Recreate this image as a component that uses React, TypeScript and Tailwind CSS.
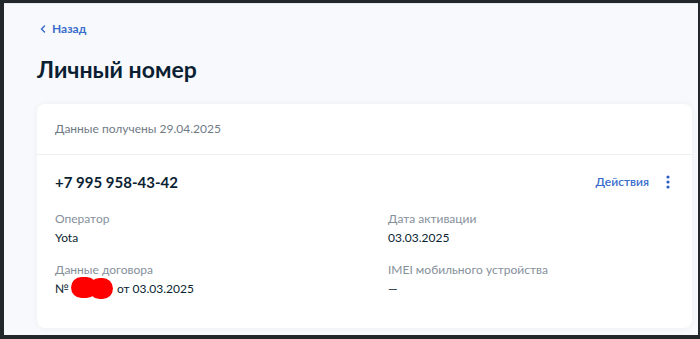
import { ChevronLeft } from 'lucide-react'

function Field({ label, children }: { label: string; children: React.ReactNode }) {
  return (
    <div className="flex flex-col">
      <span className="text-[12px] leading-[18px] text-[#86909b]">{label}</span>
      <span className="text-[12px] leading-[19px] text-[#0b1f33]">{children}</span>
    </div>
  )
}

export default function App() {
  return (
    <div
      className="h-[339px] w-[700px] overflow-hidden border-t-[3px] border-l-[4px] border-r-[2px] border-b-[4px] border-[#22272c] bg-[#f8f9fc]"
      style={{ fontFamily: 'Lato, "Noto Sans", sans-serif' }}
    >
      <div className="flex h-full flex-col border-t border-[#e6e9ee] pl-[33px] pr-[6px]">
        {/* Back link */}
        <a className="mt-[17px] flex items-center gap-[3px] text-[12px] font-bold leading-[16px] text-[#3a6dcb]">
          <ChevronLeft size={12} strokeWidth={3} />
          <span>Назад</span>
        </a>

        {/* Title */}
        <h1 className="mt-[17px] text-[23px] font-bold leading-[30px] text-[#0b1f33]">Личный номер</h1>

        {/* Card */}
        <div className="mt-[20px] rounded-[8px] bg-white shadow-[0_0_6px_rgba(40,60,120,0.06)]">
          <div className="flex h-[51px] items-center border-b border-[#eceef2] px-[18px]">
            <span className="text-[12px] text-[#6f7a85]">Данные получены 29.04.2025</span>
          </div>

          <div className="px-[18px] pt-[16px] pb-[30px]">
            <div className="flex items-center justify-between">
              <span className="text-[15px] font-bold leading-[22px] text-[#0b1f33]">+7 995 958-43-42</span>
              <div className="flex items-center gap-[17px] pr-[4px]">
                <span className="text-[12px] font-semibold text-[#3a6dcb]">Действия</span>
                <svg width="4" height="14" viewBox="0 0 4 14" className="text-[#2d5fc0]">
                  <circle cx="2" cy="2" r="1.6" fill="currentColor" />
                  <circle cx="2" cy="7" r="1.6" fill="currentColor" />
                  <circle cx="2" cy="12" r="1.6" fill="currentColor" />
                </svg>
              </div>
            </div>

            <div className="mt-[17px] grid grid-cols-[333px_1fr] gap-y-[14px]">
              <Field label="Оператор">Yota</Field>
              <Field label="Дата активации">03.03.2025</Field>
              <Field label="Данные договора">
                <span className="flex items-center">
                  №
                  <span className="relative ml-[2px] mr-[4px] inline-flex h-[19px] w-[42px]">
                    <span className="absolute left-0 top-[-2px] h-[21px] w-[26px] rounded-full bg-[#ff0000]" />
                    <span className="absolute left-[18px] top-[-1px] h-[21px] w-[24px] rounded-full bg-[#ff0000]" />
                  </span>
                  от 03.03.2025
                </span>
              </Field>
              <Field label="IMEI мобильного устройства">—</Field>
            </div>
          </div>
        </div>
      </div>
    </div>
  )
}
